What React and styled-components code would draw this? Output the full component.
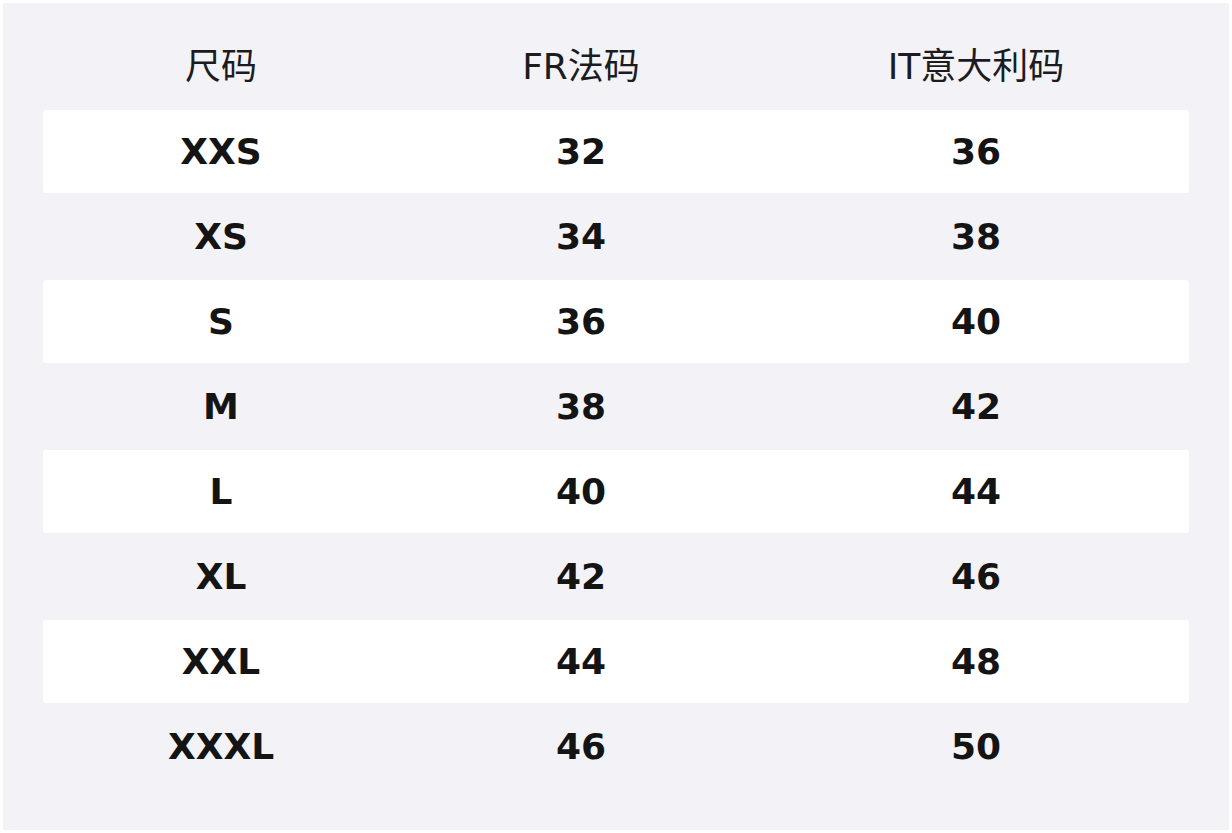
import React from "react";
import styled, { createGlobalStyle } from "styled-components";

const GlobalStyle = createGlobalStyle`
  html, body {
    margin: 0;
    padding: 0;
    background: #ffffff;
  }
  body {
    padding: 3px;
    font-family: "DejaVu Sans", "Noto Sans CJK SC", sans-serif;
  }
`;

const Panel = styled.div`
  width: 1226px;
  height: 827px;
  box-sizing: border-box;
  background: #f3f3f7;
  padding: 22px 40px 40px;
  border-radius: 2px;
`;

const Row = styled.div`
  display: grid;
  grid-template-columns: 356px 364px 1fr;
  box-sizing: border-box;
  height: ${p => (p.$header ? 85 : 83)}px;
  padding-bottom: ${p => (p.$header ? 9 : 0)}px;
  margin-bottom: ${p => (p.$header ? 0 : 2)}px;
  align-items: center;
  background: ${p => (p.$white ? "#ffffff" : "transparent")};
  border-radius: 3px;
`;

const HeadCell = styled.div`
  text-align: center;
  font-family: "DejaVu Sans", "Noto Sans CJK SC", sans-serif;
  font-size: 36px;
  font-weight: 400;
  color: #1c1c1e;
`;

const Cell = styled.div`
  text-align: center;
  font-family: "DejaVu Sans", sans-serif;
  font-size: 36px;
  font-weight: 700;
  color: #141414;
`;

const rows = [
  ["XXS", "32", "36"],
  ["XS", "34", "38"],
  ["S", "36", "40"],
  ["M", "38", "42"],
  ["L", "40", "44"],
  ["XL", "42", "46"],
  ["XXL", "44", "48"],
  ["XXXL", "46", "50"],
];

export default function App() {
  return (
    <>
      <GlobalStyle />
      <Panel>
        <Row $header>
          <HeadCell>尺码</HeadCell>
          <HeadCell>FR法码</HeadCell>
          <HeadCell>IT意大利码</HeadCell>
        </Row>
        {rows.map((r, i) => (
          <Row key={r[0]} $white={i % 2 === 0}>
            {r.map((v, j) => (
              <Cell key={j}>{v}</Cell>
            ))}
          </Row>
        ))}
      </Panel>
    </>
  );
}
